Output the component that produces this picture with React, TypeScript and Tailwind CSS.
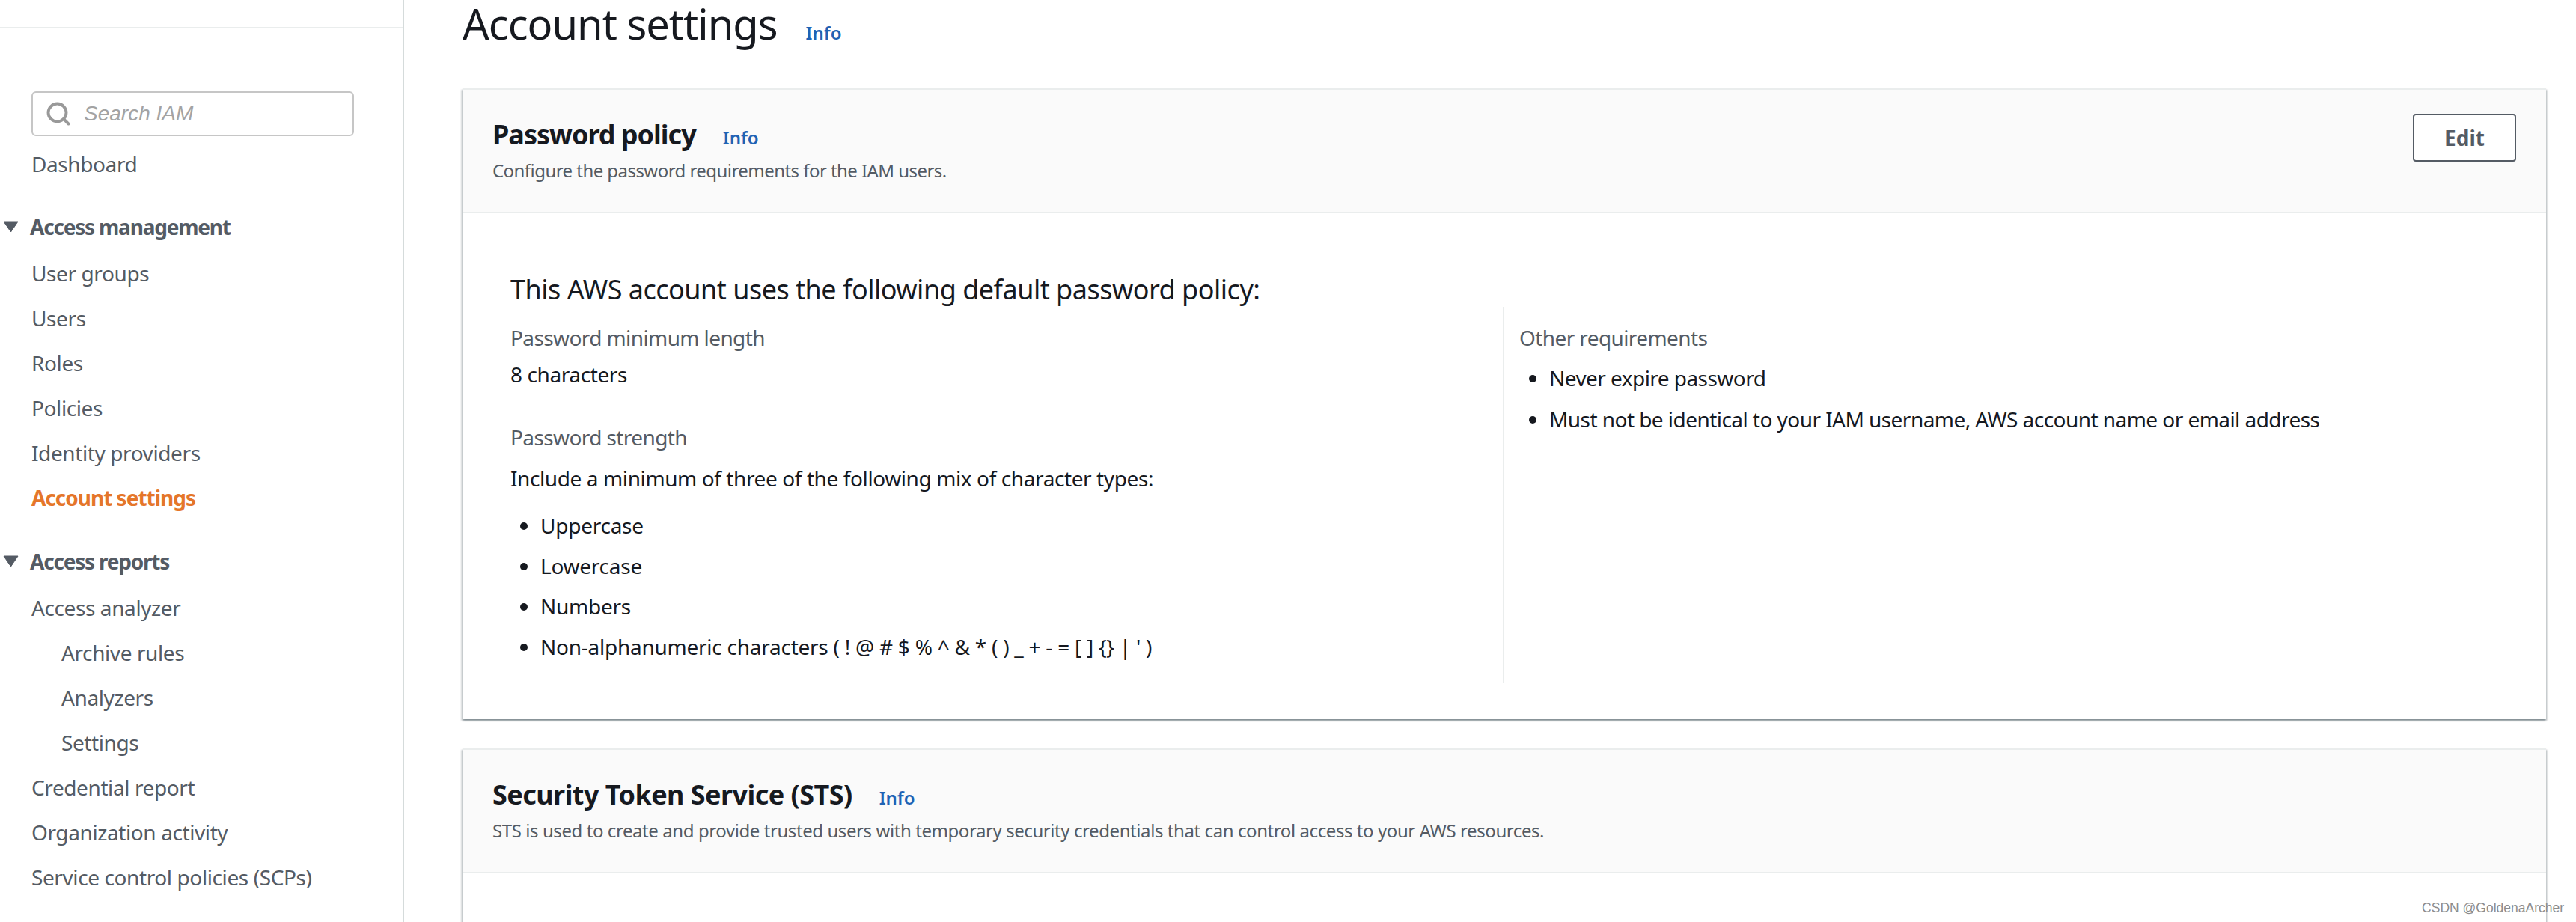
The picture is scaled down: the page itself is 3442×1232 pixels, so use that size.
import { Search } from "lucide-react";

const accessItems = ["User groups", "Users", "Roles", "Policies", "Identity providers"];

function NavItem({ label, indent, active }: { label: string; indent?: boolean; active?: boolean }) {
  return (
    <div
      className={`flex h-[60px] items-center text-[28px] ${indent ? "pl-[82px]" : "pl-[42px]"} ${
        active ? "font-bold tracking-[-1px] text-[#e5762a]" : "tracking-[-0.4px] text-[#545b64]"
      }`}
    >
      {label}
    </div>
  );
}

function NavGroup({ label, className }: { label: string; className: string }) {
  return (
    <div className={`flex h-[60px] items-center pl-[4px] text-[28px] font-bold tracking-[-1.2px] text-[#545b64] ${className}`}>
      <svg width="21" height="16" viewBox="0 0 21 16" className="mr-[15px]">
        <polygon points="1,1 20,1 10.5,15" fill="#545b64" stroke="#545b64" strokeLinejoin="round" />
      </svg>
      {label}
    </div>
  );
}

function Info() {
  return <a className="text-[24px] font-semibold text-[#1f63b5]">Info</a>;
}

function Card({
  title,
  titleClass,
  desc,
  descClass,
  edit,
  children,
}: {
  title: string;
  titleClass: string;
  desc: string;
  descClass: string;
  edit?: boolean;
  children: React.ReactNode;
}) {
  return (
    <section className="bg-white shadow-[0_2px_2px_rgba(0,28,36,0.3),2px_2px_2px_rgba(0,28,36,0.15),-2px_2px_2px_rgba(0,28,36,0.15)]">
      <div className="flex h-[167px] justify-between border-y-2 border-[#eaeded] bg-[#fafafa] px-[40px] pt-[32px]">
        <div className="pt-[6px]">
          <div className="flex items-baseline gap-[36px]">
            <h2 className={`text-[36px] leading-[44px] font-bold text-[#16191f] ${titleClass}`}>{title}</h2>
            <Info />
          </div>
          <p className={`mt-[8px] text-[24px] leading-[36px] text-[#545b64] ${descClass}`}>{desc}</p>
        </div>
        {edit && (
          <button className="h-[64px] w-[138px] rounded-[4px] border-2 border-[#545b64] bg-white text-[28px] font-bold text-[#545b64]">
            Edit
          </button>
        )}
      </div>
      {children}
    </section>
  );
}

export default function App() {
  return (
    <div className="relative flex h-[1232px] overflow-hidden bg-white font-['Noto_Sans',sans-serif] text-[#16191f]">
      <aside className="w-[540px] shrink-0 border-r-2 border-[#d5dbdb]">
        <div className="h-[38px] border-b-2 border-[#eaeded]" />
        <div className="mt-[84px] ml-[42px] flex h-[60px] w-[431px] items-center rounded-[6px] border-2 border-[#c6c6c6] pl-[16px]">
          <Search size={36} strokeWidth={2.6} className="text-[#999999]" />
          <input
            placeholder="Search IAM"
            className="ml-[16px] w-[300px] font-['Liberation_Sans',sans-serif] text-[28px] italic outline-none placeholder:text-[#a3a3a3]"
          />
        </div>
        <div className="mt-[7px]">
          <NavItem label="Dashboard" />
        </div>
        <NavGroup label="Access management" className="mt-[24px]" />
        <div className="mt-[2px]">
          {accessItems.map((item) => (
            <NavItem key={item} label={item} />
          ))}
          <NavItem label="Account settings" active />
        </div>
        <NavGroup label="Access reports" className="mt-[25px]" />
        <div className="mt-[2px]">
          <NavItem label="Access analyzer" />
          <NavItem label="Archive rules" indent />
          <NavItem label="Analyzers" indent />
          <NavItem label="Settings" indent />
          <NavItem label="Credential report" />
          <NavItem label="Organization activity" />
          <NavItem label="Service control policies (SCPs)" />
        </div>
      </aside>

      <main className="min-w-0 flex-1 pr-[40px] pl-[78px]">
        <div className="mb-[52px] flex h-[66px] items-baseline gap-[38px]">
          <h1 className="text-[56px] leading-[62px] font-normal tracking-[-1px]">Account settings</h1>
          <Info />
        </div>

        <Card
          title="Password policy"
          titleClass="tracking-[-1px]"
          desc="Configure the password requirements for the IAM users."
          descClass="tracking-[-0.55px]"
          edit
        >
          <div className="h-[676px] pt-[81px] pl-[64px]">
            <h3 className="text-[36px] leading-[42px] font-normal tracking-[-0.5px]">
              This AWS account uses the following default password policy:
            </h3>
            <div className="mt-[2px] flex h-[503px]">
              <div className="w-[1326px] pt-[21px]">
                <div className="text-[28px] leading-[40px] tracking-[-0.6px] text-[#545b64]">Password minimum length</div>
                <div className="mt-[9px] text-[28px] leading-[40px] tracking-[-0.4px]">8 characters</div>
                <div className="mt-[44px] text-[28px] leading-[40px] tracking-[-0.6px] text-[#545b64]">Password strength</div>
                <div className="mt-[15px] text-[28px] leading-[40px] tracking-[-0.4px]">
                  Include a minimum of three of the following mix of character types:
                </div>
                <ul className="mt-[23px] flex list-disc flex-col gap-[14px] pl-[40px] text-[28px] leading-[40px] tracking-[-0.25px]">
                  <li>Uppercase</li>
                  <li>Lowercase</li>
                  <li>Numbers</li>
                  <li>Non-alphanumeric characters ( ! @ # $ % ^ &amp; * ( ) _ + - = [ ] {"{}"} | ' )</li>
                </ul>
              </div>
              <div className="border-l-2 border-[#eaeded] pt-[21px] pl-[20px]">
                <div className="text-[28px] leading-[40px] tracking-[-0.6px] text-[#545b64]">Other requirements</div>
                <ul className="mt-[14px] flex list-disc flex-col gap-[15px] pl-[40px] text-[28px] leading-[40px] tracking-[-0.55px]">
                  <li>Never expire password</li>
                  <li>Must not be identical to your IAM username, AWS account name or email address</li>
                </ul>
              </div>
            </div>
          </div>
        </Card>

        <div className="mt-[39px]">
          <Card
            title="Security Token Service (STS)"
            titleClass="tracking-[-0.55px]"
            desc="STS is used to create and provide trusted users with temporary security credentials that can control access to your AWS resources."
            descClass="tracking-[-0.42px]"
          >
            <div className="h-[300px]" />
          </Card>
        </div>
      </main>

      <div className="absolute right-[16px] bottom-[6px] font-['Liberation_Sans',sans-serif] text-[17.5px] text-[#8c8c8c]">
        CSDN @GoldenaArcher
      </div>
    </div>
  );
}
